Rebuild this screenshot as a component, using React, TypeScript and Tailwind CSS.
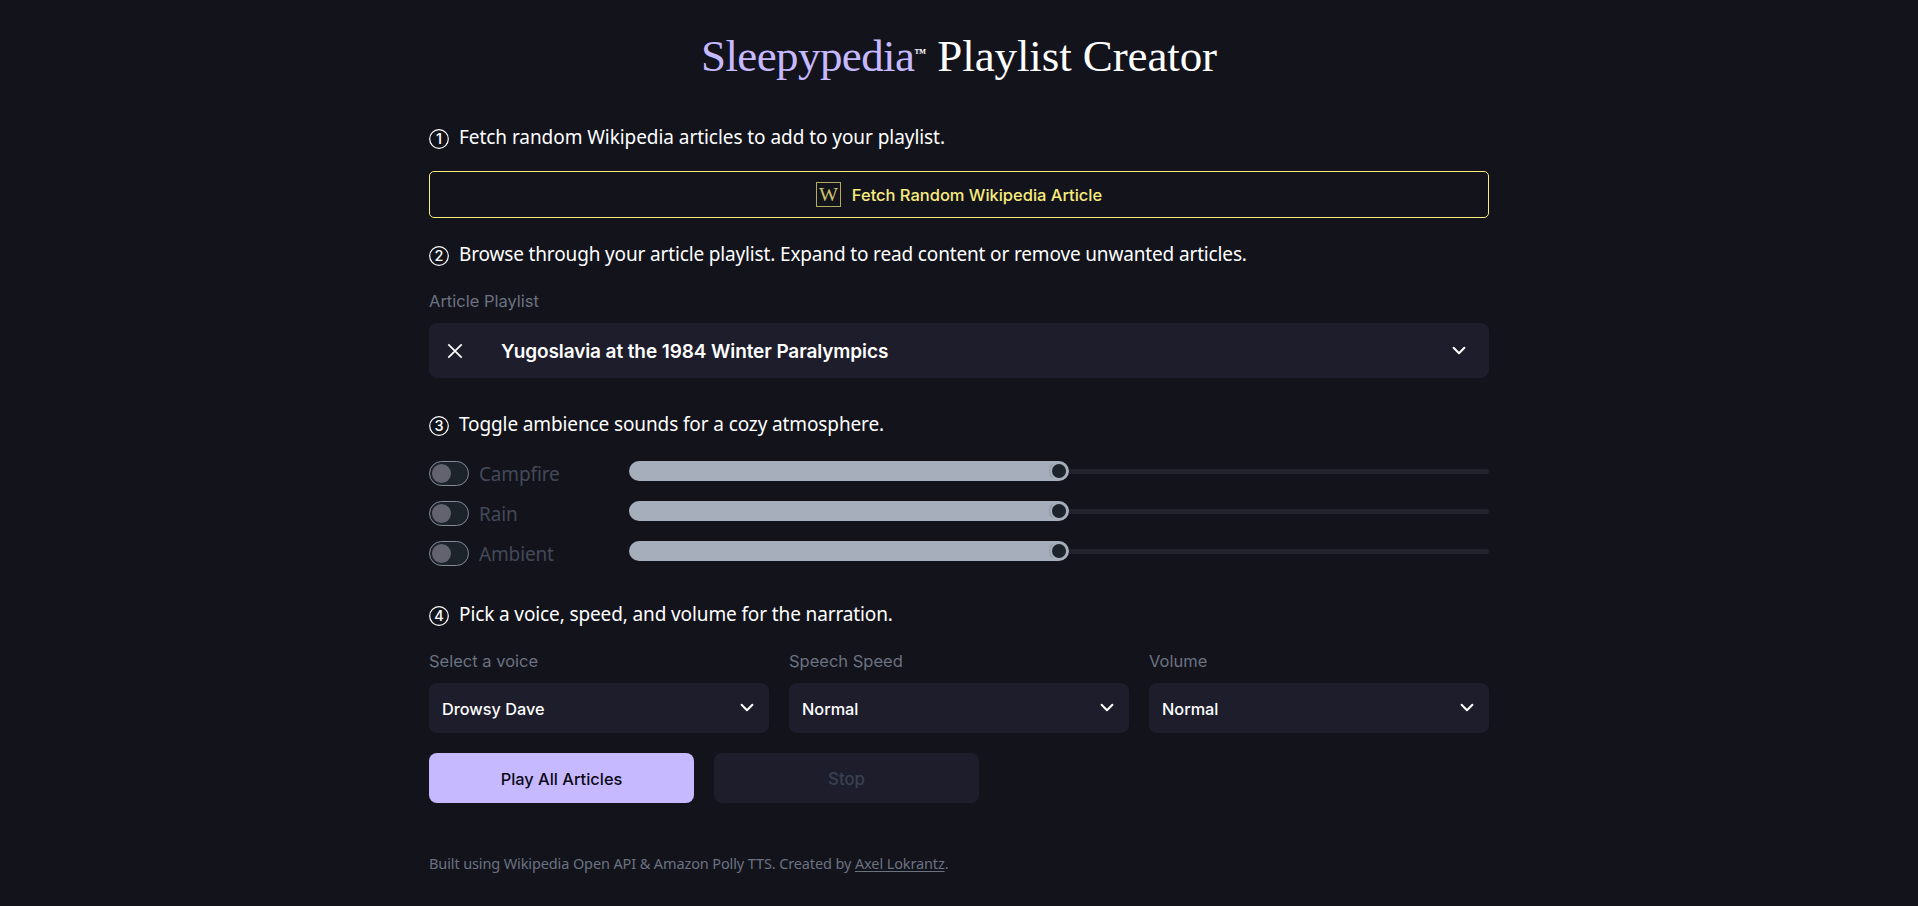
import type { ReactNode } from "react";

function Step({ n, children }: { n: number; children: ReactNode }) {
  return (
    <h2 className="flex h-7 items-center gap-[10px] font-['Noto_Sans',sans-serif] text-[19px] tracking-[-0.1px] whitespace-nowrap text-white">
      <svg width="20" height="20" viewBox="0 0 20 20" className="mt-[3px] shrink-0">
        <circle cx="10" cy="10" r="9.3" fill="none" stroke="#fff" strokeWidth="1.2" />
        <text x="10" y="15.2" textAnchor="middle" fontSize="14.5" fill="#fff" fontFamily="Inter" fontWeight="500">
          {n}
        </text>
      </svg>
      <span className={n === 1 ? "tracking-[-0.06px]" : n === 2 ? "tracking-[-0.15px]" : "tracking-[-0.12px]"}>{children}</span>
    </h2>
  );
}

function Chevron() {
  return (
    <svg width="14" height="10" viewBox="0 0 14 10" fill="none" className="shrink-0">
      <path d="M1.6 1.8 7 7.2l5.4-5.4" stroke="#fff" strokeWidth="2" strokeLinecap="round" strokeLinejoin="round" />
    </svg>
  );
}

function Label({ children }: { children: ReactNode }) {
  return <div className="h-6 text-[16.5px] leading-[25px] text-[#6b7280]">{children}</div>;
}

function Select({ label, value }: { label: string; value: string }) {
  return (
    <div className="flex flex-col gap-[10px]">
      <Label>{label}</Label>
      <button className="flex h-[50px] items-center justify-between rounded-lg bg-[#1e1d2b] pr-[15px] pl-[13px] text-[16.3px] font-medium text-white">
        <span className="pt-[2px]">{value}</span>
        <Chevron />
      </button>
    </div>
  );
}

function Ambience({ name }: { name: string }) {
  return (
    <div className="flex h-10">
      <div className="flex w-[200px] items-start gap-[10px]">
        <div className="flex h-[25px] w-10 items-center rounded-full border border-[#848a96] bg-[#1d232a] pl-[2px]">
          <div className="size-[19px] rounded-full bg-[#62636f]" />
        </div>
        <span className="font-['Noto_Sans',sans-serif] text-[19px] leading-[26px] tracking-[-0.15px] text-[#434957]">{name}</span>
      </div>
      <div className="flex h-5 flex-1 items-center">
        <div className="flex h-5 w-[440px] items-center justify-end rounded-full bg-[#a6adbb]">
          <div className="flex size-5 items-center justify-center rounded-full border border-[#8f96a5] border-y-transparent border-r-transparent">
            <div className="size-[14px] rounded-full bg-[#1d232a]" />
          </div>
        </div>
        <div className="mt-px h-[5px] flex-1 rounded-r-full bg-[#23232d]" />
      </div>
    </div>
  );
}

export default function App() {
  return (
    <main className="flex h-[906px] flex-col items-center overflow-hidden bg-[#13131c] font-['Inter',sans-serif]">
      <h1 className="mt-[28px] flex h-[57px] items-start font-['Liberation_Serif',serif] text-[45px] leading-[56px] whitespace-nowrap text-white">
        <span className="tracking-[-0.6px] text-[#c6b9ff]">Sleepypedia</span>
        <span className="mt-[19px] w-[12px] text-[12px] leading-[12px] font-bold">™</span>
        <span className="ml-[11px] tracking-[-0.1px]">Playlist Creator</span>
      </h1>

      <div className="flex w-[1060px] flex-col">
        <div className="mt-[38px]">
          <Step n={1}>Fetch random Wikipedia articles to add to your playlist.</Step>
        </div>
        <button className="mt-[20px] flex h-[47px] items-center justify-center gap-[11px] rounded-[5px] border border-[#fdee80] text-[16.5px] font-medium text-[#f8ec7e]">
          <svg width="25" height="25" viewBox="0 0 25 25">
            <rect x="0.5" y="0.5" width="24" height="24" fill="none" stroke="#b5aa62" />
            <text x="12.5" y="18.5" textAnchor="middle" fontFamily="Liberation Serif" fontSize="18.5" textLength="19" lengthAdjust="spacingAndGlyphs" fill="#cfc46c">
              W
            </text>
          </svg>
          <span className="tracking-[-0.02px] pt-px">Fetch Random Wikipedia Article</span>
        </button>

        <div className="mt-[22px]">
          <Step n={2}>Browse through your article playlist. Expand to read content or remove unwanted articles.</Step>
        </div>
        <div className="mt-[21px]">
          <Label>Article Playlist</Label>
        </div>
        <div className="mt-[10px] flex h-[55px] items-center rounded-lg bg-[#1e1d2b] pr-[23px] pl-[18px]">
          <svg width="16" height="16" viewBox="0 0 16 16" className="mt-px shrink-0">
            <path d="M1.3 1.3 14.7 14.7M14.7 1.3 1.3 14.7" stroke="#fff" strokeWidth="1.7" />
          </svg>
          <span className="ml-[38px] flex-1 pt-[3px] text-[19px] font-semibold tracking-[-0.1px] text-white">Yugoslavia at the 1984 Winter Paralympics</span>
          <Chevron />
        </div>

        <div className="mt-8">
          <Step n={3}>Toggle ambience sounds for a cozy atmosphere.</Step>
        </div>
        <div className="mt-[23px] flex flex-col">
          <Ambience name="Campfire" />
          <Ambience name="Rain" />
          <Ambience name="Ambient" />
        </div>

        <div className="mt-[19px]">
          <Step n={4}>Pick a voice, speed, and volume for the narration.</Step>
        </div>
        <div className="mt-[21px] grid grid-cols-3 gap-5">
          <Select label="Select a voice" value="Drowsy Dave" />
          <Select label="Speech Speed" value="Normal" />
          <Select label="Volume" value="Normal" />
        </div>
        <div className="mt-5 flex gap-5">
          <button className="h-[50px] w-[265px] rounded-lg bg-[#c6b9ff] pt-[2px] text-[16.4px] font-medium text-[#0c0a16]">Play All Articles</button>
          <button className="h-[50px] w-[265px] rounded-lg bg-[#1e1d2b] pt-[3px] text-[16.8px] font-medium text-[#374151]">Stop</button>
        </div>
        <footer className="mt-12 h-6 font-['Noto_Sans',sans-serif] text-[14.5px] leading-6 tracking-[-0.12px] whitespace-nowrap text-[#6b7280]">
          Built using Wikipedia Open API &amp; Amazon Polly TTS. Created by <a className="underline underline-offset-2">Axel Lokrantz</a>.
        </footer>
      </div>
    </main>
  );
}
